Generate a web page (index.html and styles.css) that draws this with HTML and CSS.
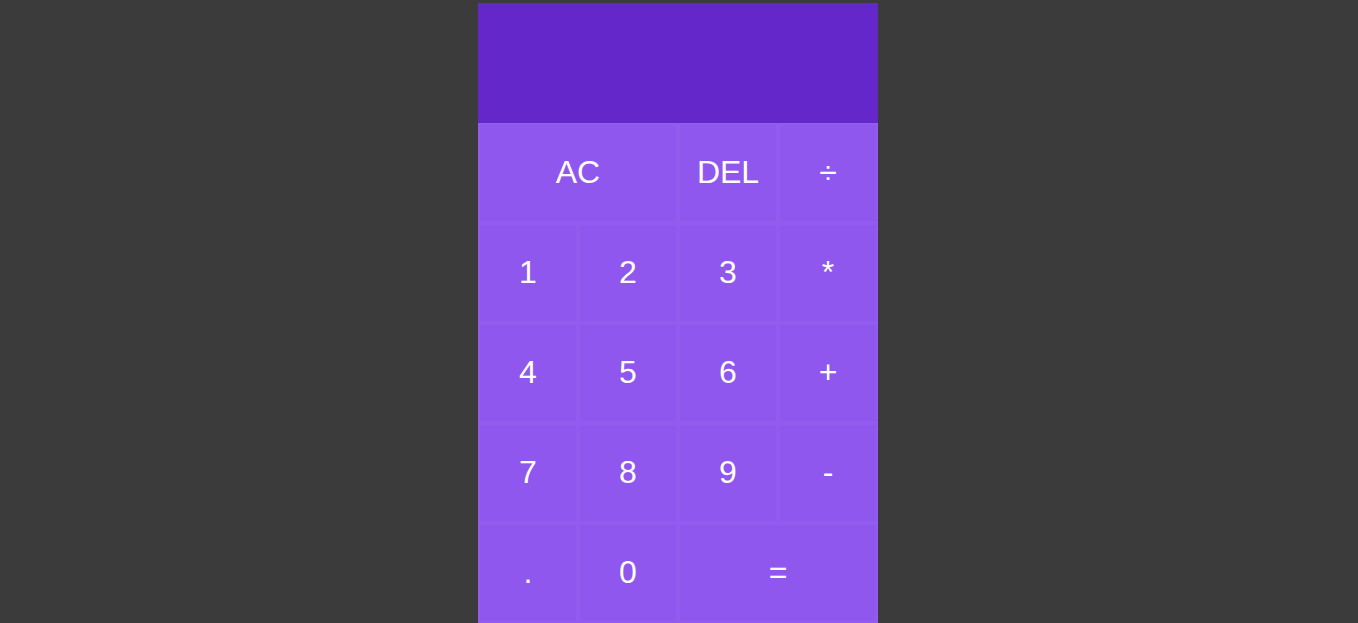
FILE: index.html
```html
<!DOCTYPE html>
<html lang="en">
<head>
<meta charset="UTF-8">
<title>Calculator</title>
<link rel="stylesheet" href="styles.css">
</head>
<body>
<div class="calculator">
  <div class="output"></div>
  <button class="span-two">AC</button>
  <button>DEL</button>
  <button>÷</button>
  <button>1</button>
  <button>2</button>
  <button>3</button>
  <button>*</button>
  <button>4</button>
  <button>5</button>
  <button>6</button>
  <button>+</button>
  <button>7</button>
  <button>8</button>
  <button>9</button>
  <button>-</button>
  <button>.</button>
  <button>0</button>
  <button class="span-two">=</button>
</div>
</body>
</html>
```
FILE: styles.css
```css
* { box-sizing: border-box; }
html, body { margin: 0; padding: 0; }
body {
  background: #3b3b3b;
  height: 623px;
  overflow: hidden;
  font-family: "Liberation Sans", Arial, sans-serif;
}
.calculator {
  display: grid;
  grid-template-columns: repeat(4, 100px);
  grid-template-rows: 120px repeat(5, 100px);
  justify-content: center;
  padding-top: 3px;
  padding-right: 2px;
}
.output {
  grid-column: 1 / -1;
  background: #6327ca;
}
.calculator button {
  font-family: "Liberation Sans", Arial, sans-serif;
  font-size: 32px;
  color: #fff;
  background: #8f57ee;
  border: 2px solid rgba(255, 255, 255, 0.035);
  outline: none;
  cursor: pointer;
  padding: 0 0 2px 0;
}
.span-two { grid-column: span 2; }
```
